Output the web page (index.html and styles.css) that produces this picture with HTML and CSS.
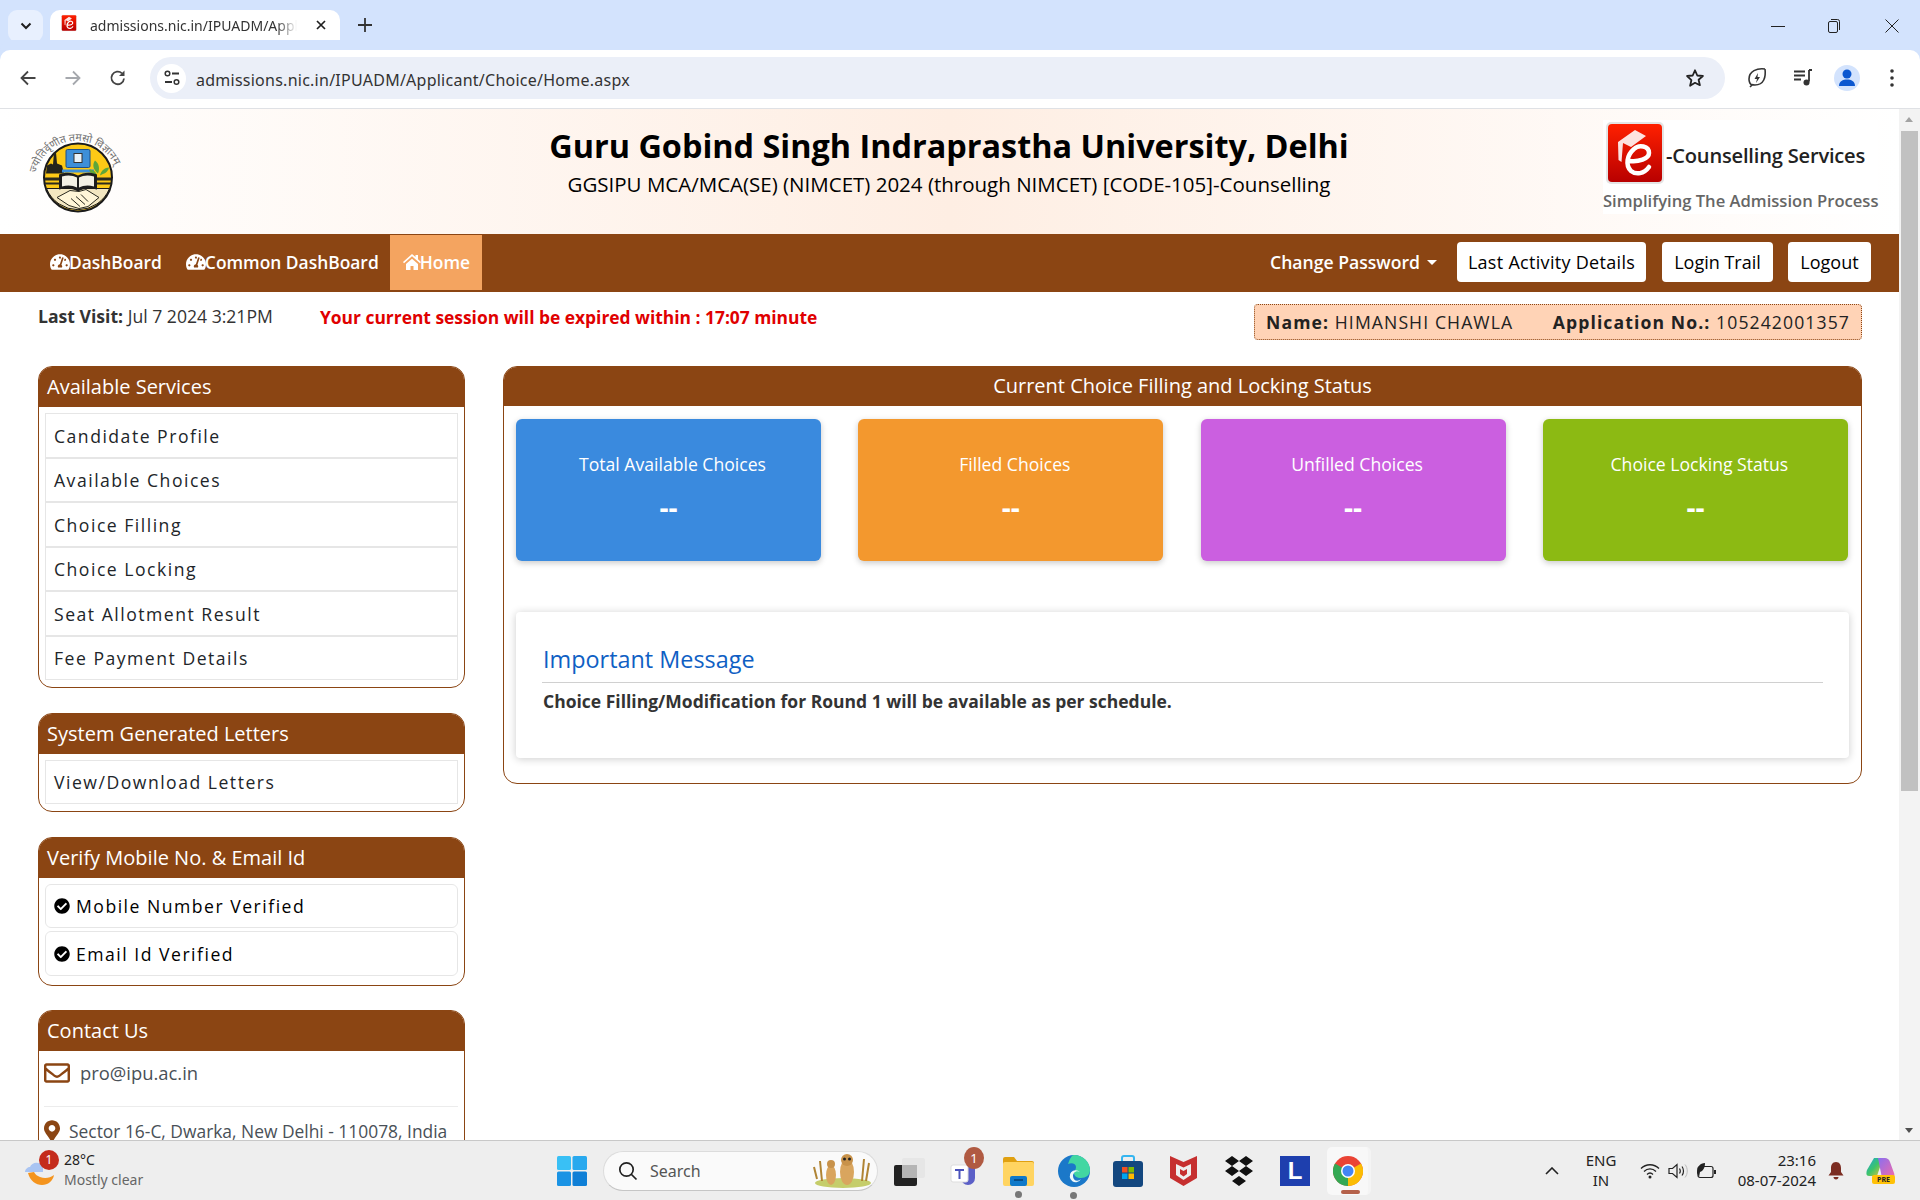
FILE: index.html
```html
<!DOCTYPE html>
<html lang="en">
<head>
<meta charset="utf-8">
<title>Home</title>
<link rel="stylesheet" href="styles.css">
</head>
<body>
<svg class="defs" width="0" height="0" aria-hidden="true">
  <symbol id="ico-dash" viewBox="0 0 576 512"><path d="M288 32C128.94 32 0 160.94 0 320c0 52.8 14.25 102.26 39.06 144.8 5.61 9.62 16.3 15.2 27.44 15.2h443c11.14 0 21.83-5.58 27.44-15.2C561.75 422.26 576 372.8 576 320c0-159.06-128.94-288-288-288zm0 64c14.71 0 26.58 10.13 30.32 23.65-1.11 2.26-2.64 4.23-3.45 6.67l-9.22 27.67c-5.13 3.49-10.97 6.01-17.64 6.01-17.67 0-32-14.33-32-32S270.33 96 288 96zM96 384c-17.67 0-32-14.33-32-32s14.33-32 32-32 32 14.33 32 32-14.33 32-32 32zm48-160c-17.67 0-32-14.33-32-32s14.33-32 32-32 32 14.33 32 32-14.33 32-32 32zm246.77-72.41l-61.33 184C343.13 347.33 352 364.54 352 384c0 11.72-3.38 22.55-8.88 32H232.88c-5.5-9.45-8.88-20.28-8.88-32 0-33.94 26.5-61.43 59.9-63.59l61.34-184.01c4.17-12.56 17.73-19.45 30.36-15.17 12.57 4.19 19.35 17.77 15.17 30.36zm14.66 57.2l15.52-46.55c3.47-1.29 7.13-2.23 11.05-2.23 17.67 0 32 14.33 32 32s-14.33 32-32 32c-11.38-.01-20.89-6.28-26.57-15.22zM480 384c-17.67 0-32-14.33-32-32s14.33-32 32-32 32 14.33 32 32-14.33 32-32 32z"/></symbol>
  <symbol id="ico-check" viewBox="0 0 512 512"><path d="M504 256c0 136.967-111.033 248-248 248S8 392.967 8 256 119.033 8 256 8s248 111.033 248 248zM227.314 387.314l184-184c6.248-6.248 6.248-16.379 0-22.627l-22.627-22.627c-6.248-6.249-16.379-6.249-22.628 0L216 308.118l-70.059-70.059c-6.248-6.248-16.379-6.248-22.628 0l-22.627 22.627c-6.248 6.248-6.248 16.379 0 22.627l104 104c6.249 6.25 16.379 6.25 22.628.001z"/></symbol>
  <symbol id="ico-elogo" viewBox="0 0 60 64">
    <rect x="1" y="1" width="58" height="62" rx="5" fill="#e4e4e4"/>
    <rect x="3" y="3" width="54" height="58" rx="4" fill="url(#redgrad)"/>
    <path d="M13 21 L30 9 L41 15 L26 26 L18 22 L16.500 41 L13.500 39 Z" fill="#fff" opacity=".88"/>
    <path d="M25 40 C33 41 44 38 44 32 C44 25 34 23 29 28 C22 34 20 44 26 50 C31 54 39 53 44 46" fill="none" stroke="#fff" stroke-width="4.500" stroke-linecap="round"/>
  </symbol>
  <linearGradient id="redgrad" x1="0" y1="0" x2="0" y2="1"><stop offset="0" stop-color="#ff2000"/><stop offset="1" stop-color="#b80000"/></linearGradient>
</svg>

<div class="tabstrip">
  <div class="tabsearch"><svg width="12" height="8" viewBox="0 0 12 8"><path d="M1.500 1.500 6 6l4.500-4.500" fill="none" stroke="#1f1f1f" stroke-width="2"/></svg></div>
  <div class="tab">
    <svg class="tab-fav" width="16" height="18" viewBox="0 0 60 64"><use href="#ico-elogo"/></svg>
    <span class="tab-title">admissions.nic.in/IPUADM/Applicant/Choice/Home.aspx</span>
    <svg class="tab-close" width="10" height="10" viewBox="0 0 10 10"><path d="M1 1l8 8M9 1l-8 8" stroke="#1f1f1f" stroke-width="1.700"/></svg>
  </div>
  <svg class="newtab" width="14" height="14" viewBox="0 0 14 14"><path d="M7 0v14M0 7h14" stroke="#333" stroke-width="1.800"/></svg>
  <div class="winctl">
    <svg width="14" height="14" viewBox="0 0 14 14"><path d="M0 7.500h14" stroke="#222" stroke-width="1"/></svg>
    <svg width="14" height="16" viewBox="0 0 14 16"><rect x="1.500" y="3.500" width="9" height="11" rx="1.500" fill="none" stroke="#222"/><path d="M4 1.500h6.500a2 2 0 0 1 2 2V12" fill="none" stroke="#222"/></svg>
    <svg width="14" height="14" viewBox="0 0 14 14"><path d="M.5.500l13 13M13.500.500l-13 13" stroke="#222" stroke-width="1"/></svg>
  </div>
</div>

<div class="toolbar">
  <svg class="tb-ico" width="18" height="18" viewBox="0 0 18 18"><path d="M16.500 9H2.500M9 2.500 2.500 9 9 15.500" fill="none" stroke="#444" stroke-width="1.800"/></svg>
  <svg class="tb-ico tb-fwd" width="18" height="18" viewBox="0 0 18 18"><path d="M1.500 9h14M9 2.500 15.500 9 9 15.500" fill="none" stroke="#a5a8ad" stroke-width="1.800"/></svg>
  <svg class="tb-ico tb-rel" width="18" height="18" viewBox="0 0 18 18"><path d="M15 9.500A6.300 6.300 0 1 1 13 4.300" fill="none" stroke="#444" stroke-width="1.800"/><path d="M15.500 1.500v5.500h-5.500z" fill="#444"/></svg>
  <div class="omnibox">
    <div class="omni-tune"><svg width="16" height="16" viewBox="0 0 16 16"><circle cx="3.500" cy="3.500" r="2.300" fill="none" stroke="#333" stroke-width="1.500"/><path d="M8 3.500h7M1 12h7" stroke="#333" stroke-width="2"/><circle cx="12.500" cy="12" r="2.300" fill="none" stroke="#333" stroke-width="1.500"/></svg></div>
    <span class="omni-url">admissions.nic.in/IPUADM/Applicant/Choice/Home.aspx</span>
    <svg class="omni-star" width="20" height="20" viewBox="0 0 20 20"><path d="M10 2.300l2.300 5.200 5.600.5-4.300 3.700 1.300 5.500L10 14.800l-4.900 2.900 1.300-5.500L2.100 8l5.600-.5z" fill="none" stroke="#222" stroke-width="1.800" stroke-linejoin="round"/></svg>
  </div>
  <svg class="tb-right tb-leaf" width="20" height="22" viewBox="0 0 20 22"><path d="M18 2C10 1 2 4 2 12c0 3 1 5 3 6l-2 2M18 2c1 8-1 16-10 16-1 0-2 0-3-.500" fill="none" stroke="#333" stroke-width="1.600"/><path d="M11 6 7.500 12H10l-1 4 4-6h-2.500z" fill="#333"/></svg>
  <svg class="tb-right tb-media" width="20" height="18" viewBox="0 0 20 18"><path d="M1 2.500h11M1 6.500h11M1 10.500h7" stroke="#333" stroke-width="1.800"/><path d="M16 1v11.500" stroke="#333" stroke-width="1.800"/><path d="M16 1h3" stroke="#333" stroke-width="2"/><circle cx="13.500" cy="13.500" r="3" fill="#333"/></svg>
  <div class="tb-avatar"><svg width="16" height="20" viewBox="0 0 16 20"><circle cx="8" cy="6" r="4.500" fill="#0b57d0"/><path d="M0 18c0-5 4-6.500 8-6.500s8 1.500 8 6.500z" fill="#0b57d0"/></svg></div>
  <svg class="tb-right tb-menu" width="4" height="18" viewBox="0 0 4 18"><circle cx="2" cy="2" r="1.800" fill="#333"/><circle cx="2" cy="9" r="1.800" fill="#333"/><circle cx="2" cy="16" r="1.800" fill="#333"/></svg>
</div>

<div class="viewport">
  <main class="page">
    <header class="site-head">
      <svg class="emblem" width="112" height="100" viewBox="0 0 112 100">
        <defs><path id="arc" d="M15 52 A 41.600 41.600 0 0 1 96 52"/></defs>
        <text class="emblem-motto"><textPath href="#arc">ज्योतिर्वृणीत तमसो विज्ञानम्</textPath></text>
        <g transform="translate(0 -5.500)">
          <circle cx="57" cy="62" r="34" fill="#fcc916" stroke="#1a1a1a" stroke-width="2"/>
          <path d="M25.500 73a34 34 0 0 0 63 0z" fill="#f3e7c1" stroke="#1a1a1a" stroke-width="1"/>
          <path d="M24 62h66v3H24zM24 67h66v2H24z" fill="#2a2a20"/>
          <path d="M26 50l4-2 2 1 1-12h2l1 11 5 2 2 8H25z" fill="#23231c"/>
          <rect x="45" y="34" width="24" height="18" rx="1.500" fill="#3d8fd8" stroke="#1d4f88"/>
          <rect x="53" y="38" width="8" height="9" fill="#e9f2f8" stroke="#333"/>
          <path d="M41 54h32v3H41z" fill="#3d8fd8"/>
          <path d="M77 58c-5-4-6-9-3-13 4 3 5 8 3 13zm2 2c4-2 8-3 9-8-4 0-8 3-9 8zm-3 0c-3-1-7-2-8-6 4 0 7 2 8 6z" fill="#5da63a"/>
          <path d="M38 59c7-3 14-2 19 1 5-3 12-4 19-1v15c-7-2-14-1-19 2-5-3-12-4-19-2z" fill="#1d1d1d"/>
          <path d="M41 61c6-2 11-1 15 1v10c-4-2-9-3-15-1zM58 62c4-2 9-3 15-1v10c-6-2-11-1-15 1z" fill="#f4f1e5"/>
          <path d="M36 82l13-7 9 1 7-2 13 8-11 9-9 2-10-3z" fill="#fff6d8" stroke="#2a2a20"/>
          <path d="M50 83l9 8M55 81l9 8M60 79l7 7" stroke="#2a2a20"/>
        </g>
      </svg>
      <div class="site-title">
        <h1>Guru Gobind Singh Indraprastha University, Delhi</h1>
        <p>GGSIPU MCA/MCA(SE) (NIMCET) 2024 (through NIMCET) [CODE-105]-Counselling</p>
      </div>
      <div class="elogo">
        <div class="elogo-top"><svg width="60" height="64" viewBox="0 0 60 64"><use href="#ico-elogo"/></svg><span class="elogo-name">-Counselling Services</span></div>
        <div class="elogo-tag">Simplifying The Admission Process</div>
      </div>
    </header>

    <nav class="navbar">
      <a class="nav-link"><svg class="nav-ico" width="20" height="18"><use href="#ico-dash"/></svg>DashBoard</a>
      <a class="nav-link"><svg class="nav-ico" width="20" height="18"><use href="#ico-dash"/></svg>Common DashBoard</a>
      <a class="nav-link nav-active"><svg class="nav-ico" width="18" height="16" viewBox="0 0 18 16"><path d="M9 0 0 8l1 1.200L9 2.200l8 7L18 8l-3-2.700V1h-2.500v2.100zM3 10v6h4.500v-4h3v4H15v-6L9 4.700z" fill="#fff"/></svg>Home</a>
      <div class="nav-right">
        <a class="nav-drop">Change Password<span class="caret"></span></a>
        <a class="nav-btn nav-btn-1">Last Activity Details</a>
        <a class="nav-btn nav-btn-2">Login Trail</a>
        <a class="nav-btn nav-btn-3">Logout</a>
      </div>
    </nav>

    <div class="info-row">
      <div class="last-visit"><b>Last Visit:</b> Jul 7 2024 3:21PM</div>
      <div class="session">Your current session will be expired within : 17:07 minute</div>
      <div class="namebox"><span><b>Name:</b> HIMANSHI CHAWLA</span><span><b>Application No.:</b> 105242001357</span></div>
    </div>

    <div class="columns">
      <aside class="sidebar">
        <section class="panel">
          <h2 class="panel-head">Available Services</h2>
          <ul class="list">
            <li class="list-item">Candidate Profile</li>
            <li class="list-item">Available Choices</li>
            <li class="list-item">Choice Filling</li>
            <li class="list-item">Choice Locking</li>
            <li class="list-item">Seat Allotment Result</li>
            <li class="list-item">Fee Payment Details</li>
          </ul>
        </section>
        <section class="panel">
          <h2 class="panel-head">System Generated Letters</h2>
          <ul class="list"><li class="list-item">View/Download Letters</li></ul>
        </section>
        <section class="panel">
          <h2 class="panel-head">Verify Mobile No. &amp; Email Id</h2>
          <ul class="list list-verify">
            <li class="list-item verified"><svg width="16" height="16"><use href="#ico-check"/></svg>Mobile Number Verified</li>
            <li class="list-item verified"><svg width="16" height="16"><use href="#ico-check"/></svg>Email Id Verified</li>
          </ul>
        </section>
        <section class="panel">
          <h2 class="panel-head">Contact Us</h2>
          <div class="contact">
            <div class="contact-mail"><svg width="26" height="26" viewBox="0 0 512 512"><path fill="#8b4513" d="M464 64H48C21.490 64 0 85.490 0 112v288c0 26.510 21.490 48 48 48h416c26.510 0 48-21.490 48-48V112c0-26.510-21.490-48-48-48zm0 48v40.805c-22.422 18.259-58.168 46.651-134.587 106.490-16.841 13.247-50.201 45.072-73.413 44.701-23.208.375-56.579-31.459-73.413-44.701C106.180 199.465 70.425 171.067 48 152.805V112h416zM48 400V214.398c22.914 18.251 55.409 43.862 104.938 82.646 21.857 17.205 60.134 55.186 103.062 54.955 42.717.231 80.509-37.199 103.053-54.947 49.528-38.783 82.032-64.401 104.947-82.653V400H48z"/></svg><span>pro@ipu.ac.in</span></div>
            <div class="contact-addr"><svg width="16" height="22" viewBox="0 0 384 512"><path fill="#8b4513" d="M172.268 501.670C26.970 291.031 0 269.413 0 192 0 85.961 85.961 0 192 0s192 85.961 192 192c0 77.413-26.970 99.031-172.268 309.670-9.535 13.774-29.930 13.773-39.464 0zM192 272c44.183 0 80-35.817 80-80s-35.817-80-80-80-80 35.817-80 80 35.817 80 80 80z"/></svg><span>Sector 16-C, Dwarka, New Delhi - 110078, India</span></div>
          </div>
        </section>
      </aside>

      <section class="panel status">
        <h2 class="status-head">Current Choice Filling and Locking Status</h2>
        <div class="cards">
          <div class="card card-blue"><div class="card-label">Total Available Choices</div><div class="card-value">--</div></div>
          <div class="card card-orange"><div class="card-label">Filled Choices</div><div class="card-value">--</div></div>
          <div class="card card-purple"><div class="card-label">Unfilled Choices</div><div class="card-value">--</div></div>
          <div class="card card-green"><div class="card-label">Choice Locking Status</div><div class="card-value">--</div></div>
        </div>
        <div class="message">
          <h3 class="message-title">Important Message</h3>
          <p class="message-text">Choice Filling/Modification for Round 1 will be available as per schedule.</p>
        </div>
      </section>
    </div>
  </main>
  <div class="scrollbar">
    <div class="sb-up"></div>
    <div class="sb-thumb"></div>
    <div class="sb-track"></div>
    <div class="sb-down"></div>
  </div>
</div>

<footer class="taskbar">
  <div class="weather">
    <div class="weather-ico">
      <svg width="32" height="34" viewBox="0 0 32 34"><path d="M3 18c2 8 8 12 14 12 6 0 11-4 12-10-4 3-9 4-14 2-3-1-5-3-6-5z" fill="#f4941e"/><path d="M0 17c0-3 3-5 5-5 1-3 5-5 8-4 3 0 5 3 5 5v4z" fill="#a9c4f2"/></svg>
      <span class="weather-badge">1</span>
    </div>
    <div class="weather-text"><div>28°C</div><div class="weather-sub">Mostly clear</div></div>
  </div>
  <div class="task-center">
    <svg class="tk-win" width="30" height="30" viewBox="0 0 30 30"><rect width="14" height="14" rx="1.500" fill="#39c0f5"/><rect x="15.500" width="14.500" height="14" rx="1.500" fill="#29a9ee"/><rect y="15.500" width="14" height="14.500" rx="1.500" fill="#1a93e4"/><rect x="15.500" y="15.500" width="14.500" height="14.500" rx="1.500" fill="#0f7fd6"/></svg>
    <div class="tk-search">
      <svg width="20" height="20" viewBox="0 0 20 20"><circle cx="8.500" cy="8.500" r="6.700" fill="none" stroke="#222" stroke-width="1.700"/><path d="M13 13l5.500 5.500" stroke="#222" stroke-width="1.700"/></svg>
      <span>Search</span>
      <svg class="tk-meerkat" width="62" height="36" viewBox="0 0 62 36"><ellipse cx="32" cy="30" rx="28" ry="5" fill="#c5cd6a"/><path d="M3 14l3 12M9 8l2 20M58 10l-3 18M53 6l-2 22" stroke="#b08434" stroke-width="2"/><ellipse cx="20" cy="22" rx="5" ry="10" fill="#d9a55e"/><circle cx="20" cy="11" r="4" fill="#c8924a"/><ellipse cx="36" cy="19" rx="7" ry="13" fill="#d9a55e"/><circle cx="36" cy="7" r="6" fill="#c8924a"/><circle cx="33.500" cy="6" r="1.500" fill="#222"/><circle cx="38.500" cy="6" r="1.500" fill="#222"/></svg>
    </div>
    <svg class="tk-view" width="31" height="28" viewBox="0 0 31 28"><rect x="8" y="0" width="23" height="20" rx="2" fill="#e6e6e6"/><rect x="0" y="7" width="23" height="21" rx="2" fill="#222"/><rect x="8" y="7" width="15" height="13" fill="#b5b5b5"/></svg>
    <div class="tk-teams">
      <svg width="30" height="30" viewBox="0 0 30 30"><circle cx="21" cy="6" r="4" fill="#7b83eb"/><path d="M11 11h14v11a7 7 0 0 1-14 0z" fill="#5b5fc7"/><rect x="1" y="9" width="17" height="17" rx="2" fill="#fff" stroke="#ddd"/><path d="M5 13h9v2h-3.500v8h-2v-8H5z" fill="#4b53bc"/></svg>
      <span class="tk-badge">1</span>
    </div>
    <div class="tk-pinned">
      <svg width="31" height="30" viewBox="0 0 31 30"><path d="M0 3a2 2 0 0 1 2-2h9l3 4h15a2 2 0 0 1 2 2v4H0z" fill="#e0a010"/><rect y="6" width="31" height="24" rx="2" fill="#ffd461"/><rect x="7" y="20" width="17" height="10" rx="2" fill="#0f79c9"/><path d="M11 24h9" stroke="#063f70" stroke-width="1.500"/></svg>
      <span class="tk-dot"></span>
    </div>
    <div class="tk-pinned tk-edge">
      <svg width="32" height="32" viewBox="0 0 32 32"><circle cx="16" cy="16" r="16" fill="#1b78c9"/><path d="M16 0c9 0 16 7 16 15 0 5-4 8-9 8-4 0-7-2-7-5 0-2 2-3 2-6 0-3-4-5-8-3C12 3 14 0 16 0z" fill="#42d7a2"/><path d="M22 17a6 6 0 1 0 1 7c-3 3-8 2-8-3 0-3 3-6 7-4z" fill="#eef8fb"/></svg>
      <span class="tk-dot"></span>
    </div>
    <svg class="tk-store" width="30" height="32" viewBox="0 0 30 32"><path d="M9 7V3a2 2 0 0 1 2-2h8a2 2 0 0 1 2 2v4" fill="none" stroke="#35b5f0" stroke-width="2"/><rect y="6" width="30" height="26" rx="3" fill="#13477f"/><rect x="9" y="12" width="5.500" height="5.500" fill="#f25022"/><rect x="15.500" y="12" width="5.500" height="5.500" fill="#7fba00"/><rect x="9" y="18.500" width="5.500" height="5.500" fill="#00a4ef"/><rect x="15.500" y="18.500" width="5.500" height="5.500" fill="#ffb900"/></svg>
    <svg class="tk-mcafee" width="27" height="30" viewBox="0 0 27 30"><path d="M0 0l13.500 6L27 0v22l-13.500 8L0 22z" fill="#c62f2f"/><path d="M6 8l7.500 3.500L21 8v11l-7.500 5L6 19z" fill="#eeeeee"/><path d="M10 13l3.500 2 3.500-2v5l-3.500 2.500L10 18z" fill="#c62f2f"/></svg>
    <svg class="tk-drop" width="30" height="30" viewBox="0 0 30 30"><path d="M8 0l7 5-7 5-7-5zM22 0l7 5-7 5-7-5zM8 10l7 5-7 5-7-5zM22 10l7 5-7 5-7-5zM15 20l7 5-7 5-7-5z" fill="#111"/></svg>
    <div class="tk-l"><span>L</span></div>
    <div class="tk-chrome">
      <svg width="30" height="30" viewBox="0 0 30 30"><circle cx="15" cy="15" r="15" fill="#ea4335"/><path d="M15 15 28 7.500A15 15 0 0 1 15 30z" fill="#fbbc04"/><path d="M15 15 15 30A15 15 0 0 1 2 7.500z" fill="#34a853"/><circle cx="15" cy="15" r="7" fill="#fff"/><circle cx="15" cy="15" r="5.500" fill="#4285f4"/></svg>
      <span class="tk-active"></span>
    </div>
  </div>
  <div class="tray">
    <svg class="tray-chev" width="14" height="8" viewBox="0 0 14 8"><path d="M1 7l6-6 6 6" fill="none" stroke="#222" stroke-width="1.600"/></svg>
    <div class="tray-lang"><div>ENG</div><div>IN</div></div>
    <svg width="20" height="16" viewBox="0 0 20 16"><path d="M1 5.500c5-5 13-5 18 0M4 8.500c3.500-3.500 8.500-3.500 12 0M7 11.500c1.800-1.800 4.200-1.800 6 0" fill="none" stroke="#222" stroke-width="1.300"/><circle cx="10" cy="14" r="1.500" fill="#222"/></svg>
    <svg width="20" height="18" viewBox="0 0 20 18"><path d="M1 6.500h3.500L9 2.500v13L4.500 11.500H1z" fill="none" stroke="#222" stroke-width="1.200"/><path d="M11.500 6.500c1 1.500 1 3.500 0 5M14 4.500c2 2.500 2 6.500 0 9" fill="none" stroke="#222" stroke-width="1.200"/><path d="M17 2.500c3 3.500 3 9.500 0 13" fill="none" stroke="#bbb" stroke-width="1"/></svg>
    <svg width="21" height="18" viewBox="0 0 21 18"><rect x="2" y="4.500" width="15" height="11" rx="2" fill="none" stroke="#222" stroke-width="1.200"/><path d="M18 8h2v4h-2z" fill="#222"/><path d="M1 11C1 5 4 1 9 1c0 5-2 8-5 9l-1 5z" fill="#222"/></svg>
    <div class="tray-clock"><div>23:16</div><div>08-07-2024</div></div>
    <svg class="tray-bell" width="16" height="20" viewBox="0 0 16 20"><path d="M8 1c3.500 0 5 3 5 6v4l2.500 3.500H.5L3 11V7c0-3 1.500-6 5-6z" fill="#7c2d22"/><path d="M5.500 16h5c0 1.500-1 2.500-2.500 2.500S5.500 17.500 5.500 16z" fill="#7c2d22"/></svg>
    <div class="tray-copilot">
      <svg width="29" height="25" viewBox="0 0 29 25"><defs><linearGradient id="cpa" x1="0" y1="0" x2="1" y2="1"><stop offset="0" stop-color="#1aa5e0"/><stop offset=".5" stop-color="#3dc46a"/><stop offset="1" stop-color="#f2c230"/></linearGradient><linearGradient id="cpb" x1="0" y1="0" x2="1" y2="1"><stop offset="0" stop-color="#8a6ff0"/><stop offset="1" stop-color="#f26aa8"/></linearGradient></defs><path d="M8 2h9l-6 18H3c-3 0-3-3-2-6z" fill="url(#cpa)"/><path d="M12 2h7c2 0 4 1 5 4l4 11c1 3 0 5-3 5h-9z" fill="url(#cpb)"/></svg>
      <span class="tray-pre">PRE</span>
    </div>
  </div>
</footer>
</body>
</html>
```

FILE: styles.css
```css
* { box-sizing: border-box; }
html, body { margin: 0; height: 100%; }
body {
  width: 1920px; height: 1200px; overflow: hidden;
  display: flex; flex-direction: column;
  font-family: "Open Sans", "Noto Sans", sans-serif;
  background: #fff; color: #212529;
}
.defs { position: absolute; }
h1, h2, h3, p, ul { margin: 0; padding: 0; }
ul { list-style: none; }

/* browser chrome */
.tabstrip { height: 50px; flex: none; background: #d3e3fd; display: flex; align-items: flex-start; }
.tabsearch { width: 35px; height: 32px; margin: 10px 0 0 8px; background: #e8f0fe; border-radius: 9px; display: flex; align-items: center; justify-content: center; }
.tab { width: 290px; height: 40px; margin: 10px 0 0 7px; background: #fff; border-radius: 10px 10px 0 0; display: flex; align-items: center; padding: 0 12px 10px 11px; }
.tab-fav { flex: none; margin-top: -4px; }
.tab-title { width: 207px; margin-left: 13px; font-size: 14px; color: #333; white-space: nowrap; overflow: hidden; font-family: "Noto Sans", sans-serif; -webkit-mask-image: linear-gradient(90deg, #000 90%, transparent); mask-image: linear-gradient(90deg, #000 90%, transparent); }
.tab-close { margin-left: 19px; flex: none; }
.newtab { margin: 18px 0 0 18px; }
.winctl { margin: 18px 21px 0 auto; display: flex; gap: 42px; align-items: center; }
.winctl svg:last-child { margin-left: 2px; }
.toolbar { height: 59px; flex: none; background: #fff; border-top-left-radius: 10px; border-top-right-radius: 10px; border-bottom: 1px solid #dfe1e5; display: flex; align-items: center; padding: 0 0 2px 19px; box-shadow: 0 -10px 0 #d3e3fd; }
.tb-fwd { margin-left: 27px; }
.tb-rel { margin-left: 27px; }
.omnibox { width: 1575px; height: 42px; margin-left: 23px; background: #ebeff8; border-radius: 21px; display: flex; align-items: center; padding: 0 20px 0 7px; }
.omni-tune { width: 29px; height: 29px; border-radius: 50%; background: #fff; display: flex; align-items: center; justify-content: center; }
.omni-url { margin: 3px 0 0 10px; font-size: 16px; color: #333; font-family: "Noto Sans", sans-serif; letter-spacing: .25px; }
.omni-star { margin-left: auto; }
.tb-right { flex: none; }
.tb-leaf { margin-left: 22px; }
.tb-media { margin-left: 26px; }
.tb-avatar { width: 26px; height: 26px; margin-left: 21px; border-radius: 50%; background: #d3e3fd; display: flex; align-items: center; justify-content: center; }
.tb-menu { margin-left: 30px; }

/* page frame */
.viewport { flex: 1; min-height: 0; display: flex; }
.page { flex: 1; min-width: 0; overflow: hidden; }
.scrollbar { width: 21px; flex: none; background: #f3f3f3; display: flex; flex-direction: column; align-items: center; }
.sb-up { height: 22px; width: 100%; flex: none; position: relative; }
.sb-up::after { content: ""; position: absolute; left: 6px; top: 8px; border: 4.500px solid transparent; border-top: 0; border-bottom: 5px solid #a3a3a3; }
.sb-thumb { width: 17px; height: 660px; background: #c1c1c1; flex: none; }
.sb-track { flex: 1; }
.sb-down { height: 18px; width: 100%; flex: none; position: relative; }
.sb-down::after { content: ""; position: absolute; left: 6px; top: 6px; border: 4.500px solid transparent; border-bottom: 0; border-top: 5px solid #505050; }

/* site header */
.site-head { height: 125px; display: flex; align-items: flex-start; background: linear-gradient(90deg, #fff 0%, #feeee3 50%, #fff 100%); }
.emblem { flex: none; margin: 12px 0 0 21px; }
.site-title { flex: 1; min-width: 0; text-align: center; padding: 13px 0 0 162px; }
.site-title h1 { font-size: 32.400px; line-height: 46px; font-weight: 700; color: #000; white-space: nowrap; }
.site-title p { font-size: 20.500px; line-height: 27px; color: #000; font-weight: 500; margin-top: 3px; white-space: nowrap; }
.elogo { flex: none; margin: 11px 21px 0 0; width: 275px; background: #fff; height: 94px; }
.elogo-top { display: flex; align-items: center; height: 66px; padding-left: 2px; }
.elogo-name { font-size: 20.100px; font-weight: 600; color: #222; letter-spacing: -.2px; margin: 4px 0 0 1px; white-space: nowrap; }
.elogo-tag { font-size: 16.600px; line-height: 29px; color: #666; font-weight: 600; white-space: nowrap; }

/* nav */
.navbar { height: 58px; background: #8b4513; display: flex; align-items: flex-start; padding-left: 50px; }
.nav-link { display: flex; align-items: center; height: 54px; margin-top: 1px; font-size: 17.400px; font-weight: 600; color: #fff; margin-right: 24px; }
.nav-ico { fill: #fff; flex: none; margin-right: -1px; }
.nav-active { background: #f4a460; margin-right: 0; margin-left: -13px; padding: 0 12px 0 13px; width: 92px; height: 55px; padding-bottom: 1px; }
.nav-right { margin-left: auto; display: flex; align-items: center; height: 56px; padding-right: 28px; }
.nav-drop { font-size: 17.600px; font-weight: 600; color: #fff; display: flex; align-items: center; margin-right: 20px; }
.caret { margin-left: 7px; border: 5px solid transparent; border-bottom: 0; border-top: 5px solid #fff; }
.nav-btn { height: 40px; background: #fff; border-radius: 4px; color: #000; font-size: 18px; font-weight: 500; display: flex; align-items: center; justify-content: center; }
.nav-btn-1 { width: 189px; margin-right: 16px; letter-spacing: .3px; }
.nav-btn-2 { width: 111px; margin-right: 15px; }
.nav-btn-3 { width: 83px; }

/* info row */
.info-row { height: 74px; display: flex; align-items: flex-start; padding: 0 37px 0 38px; }
.last-visit { width: 282px; font-size: 17.600px; line-height: 24px; margin-top: 12px; color: #333; }
.last-visit b { font-weight: 700; }
.session { font-size: 17.400px; line-height: 24px; margin-top: 13px; color: #e00000; font-weight: 700; }
.namebox { margin: 12px 0 0 auto; width: 608px; height: 36px; background: #ffd3b6; border: 1px dotted #8b4513; border-radius: 4px; display: flex; align-items: center; justify-content: space-between; padding: 0 11px; font-size: 17.600px; letter-spacing: 1.100px; color: #222; white-space: nowrap; }
.namebox b { font-weight: 700; }

/* columns */
.columns { display: grid; grid-template-columns: 427px 1359px; gap: 38px; padding-left: 38px; align-items: start; }
.sidebar { display: flex; flex-direction: column; gap: 24.500px; }
.panel { border: 1px solid #8b4513; border-radius: 14px; background: #fff; overflow: hidden; }
.panel-head { background: #8b4513; color: #fff; font-size: 20px; font-weight: 400; height: 41px; line-height: 41px; padding-left: 9px; margin: -1px -1px 0; }
.list { padding: 6px 6px 7px; }
.list-item { height: 44.500px; border: 1px solid #e6e6e6; padding: 1px 0 0 8px; display: flex; align-items: center; font-size: 17.600px; font-weight: 500; letter-spacing: 1.500px; color: #212529; }
.list-verify { display: flex; flex-direction: column; gap: 3px; padding-bottom: 9px; }
.verified { border-radius: 6px; color: #000; gap: 6px; padding-left: 8px; }
.verified svg { fill: #000; flex: none; }
.contact { padding: 1.500px 6px 20px 5px; height: 102px; }
.contact-mail { display: flex; align-items: center; gap: 10px; height: 40px; font-size: 18.400px; color: #495057; }
.contact-addr { display: flex; align-items: center; gap: 9px; margin-top: 13px; padding-top: 12px; border-top: 1px solid #ececec; font-size: 17.400px; color: #495057; white-space: nowrap; }

/* status */
.status { height: 418px; }
.status-head { background: #8b4513; color: #fff; font-size: 20px; font-weight: 400; height: 40px; line-height: 40px; text-align: center; margin: -1px -1px 0; }
.cards { display: grid; grid-template-columns: repeat(4, 305px); gap: 37.300px; padding: 13px 12px 0 12px; }
.card { height: 142px; border-radius: 6px; color: #fff; text-align: center; box-shadow: 0 2px 6px rgba(0,0,0,.22); padding-top: 32px; }
.card-label { font-size: 17.600px; line-height: 26px; padding-left: 8px; }
.card-value { font-size: 28px; font-weight: 700; line-height: 32px; margin-top: 14px; }
.card-blue { background: #3a8ade; }
.card-orange { background: #f3982e; }
.card-purple { background: #cb5fe0; }
.card-green { background: #8cba13; }
.message { margin: 51px 12px 0; height: 146px; border-radius: 4px; background: #fff; box-shadow: 0 1px 8px rgba(0,0,0,.2); padding: 25px 26px 0; }
.message-title { font-size: 23.400px; font-weight: 500; line-height: 45px; color: #0f5fc4; border-bottom: 1px solid #d0d0d0; padding-left: 1px; }
.message-text { font-size: 17.500px; line-height: 26px; font-weight: 700; color: #333; padding-left: 1px; margin-top: 5px; }

/* emblem */
.emblem-motto { font-family: "Noto Sans", "Noto Sans CJK SC", sans-serif; font-size: 10.500px; fill: #707070; }

/* taskbar */
.taskbar { height: 60px; flex: none; background: #eeeeee; border-top: 1px solid #c8c8c8; display: flex; align-items: center; position: relative; font-family: "Noto Sans", sans-serif; }
.weather { width: 540px; flex: none; display: flex; align-items: center; padding-left: 25px; }
.weather-ico { position: relative; width: 32px; height: 34px; margin-top: 2px; }
.weather-badge { position: absolute; left: 14px; top: -5px; width: 20px; height: 20px; border-radius: 50%; background: #c42b1c; color: #fff; font-size: 12px; line-height: 20px; text-align: center; }
.weather-text { margin: -2px 0 0 7px; font-size: 14px; line-height: 20px; color: #222; }
.weather-sub { color: #666; }
.task-center { display: flex; align-items: center; margin-left: 17px; height: 100%; }
.tk-search { width: 275px; height: 40px; margin-left: 16px; border-radius: 20px; background: #fafafa; border: 1px solid #dcdcdc; border-bottom-color: #c6c6c6; display: flex; align-items: center; padding-left: 14px; font-size: 16px; color: #555; position: relative; }
.tk-search span { margin-left: 12px; }
.tk-meerkat { position: absolute; right: 4px; top: 1px; }
.tk-view { margin-left: 16px; margin-top: 3px; }
.tk-teams { position: relative; margin-left: 25px; width: 30px; height: 30px; }
.tk-badge { position: absolute; left: 14px; top: -9px; width: 20px; height: 22px; border-radius: 50%; background: #b05a42; color: #fff; font-size: 13px; line-height: 22px; text-align: center; }
.tk-pinned { position: relative; display: flex; margin-left: 23px; }
.tk-edge { margin-left: 24px; }
.tk-dot { position: absolute; left: 50%; margin-left: -4px; bottom: -12px; width: 7px; height: 7px; border-radius: 50%; background: #777; }
.tk-store { margin-left: 23px; }
.tk-mcafee { margin-left: 27px; }
.tk-drop { margin-left: 27px; }
.tk-l { width: 30px; height: 30px; margin-left: 26px; background: #1e3fae; color: #fff; font-family: "Liberation Sans", sans-serif; font-weight: 700; font-size: 24px; line-height: 30px; text-align: center; }
.tk-chrome { position: relative; width: 44px; height: 48px; margin-left: 17px; background: #f8f8f8; border-radius: 5px; border-right: 3px solid #f4f4f4; display: flex; align-items: center; justify-content: center; }
.tk-active { position: absolute; bottom: 1px; left: 14px; width: 19px; height: 4px; border-radius: 2px; background: #b5614a; }
.tray { margin-left: auto; display: flex; align-items: center; padding-right: 25px; font-size: 15px; color: #222; }
.tray-lang { width: 48px; margin: -2px 15px 0 18px; text-align: center; line-height: 20px; }
.tray > svg + svg { margin-left: 8px; }
.tray-clock { text-align: right; width: 90px; margin: -2px 0 0 9px; line-height: 20px; }
.tray-bell { margin-left: 12px; }
.tray-copilot { position: relative; margin-left: 22px; width: 29px; height: 30px; }
.tray-pre { position: absolute; left: 6px; top: 19px; width: 23px; height: 9px; border-radius: 2px; background: #ffc107; color: #222; font-size: 7px; font-weight: 700; line-height: 9px; text-align: center; }
```
